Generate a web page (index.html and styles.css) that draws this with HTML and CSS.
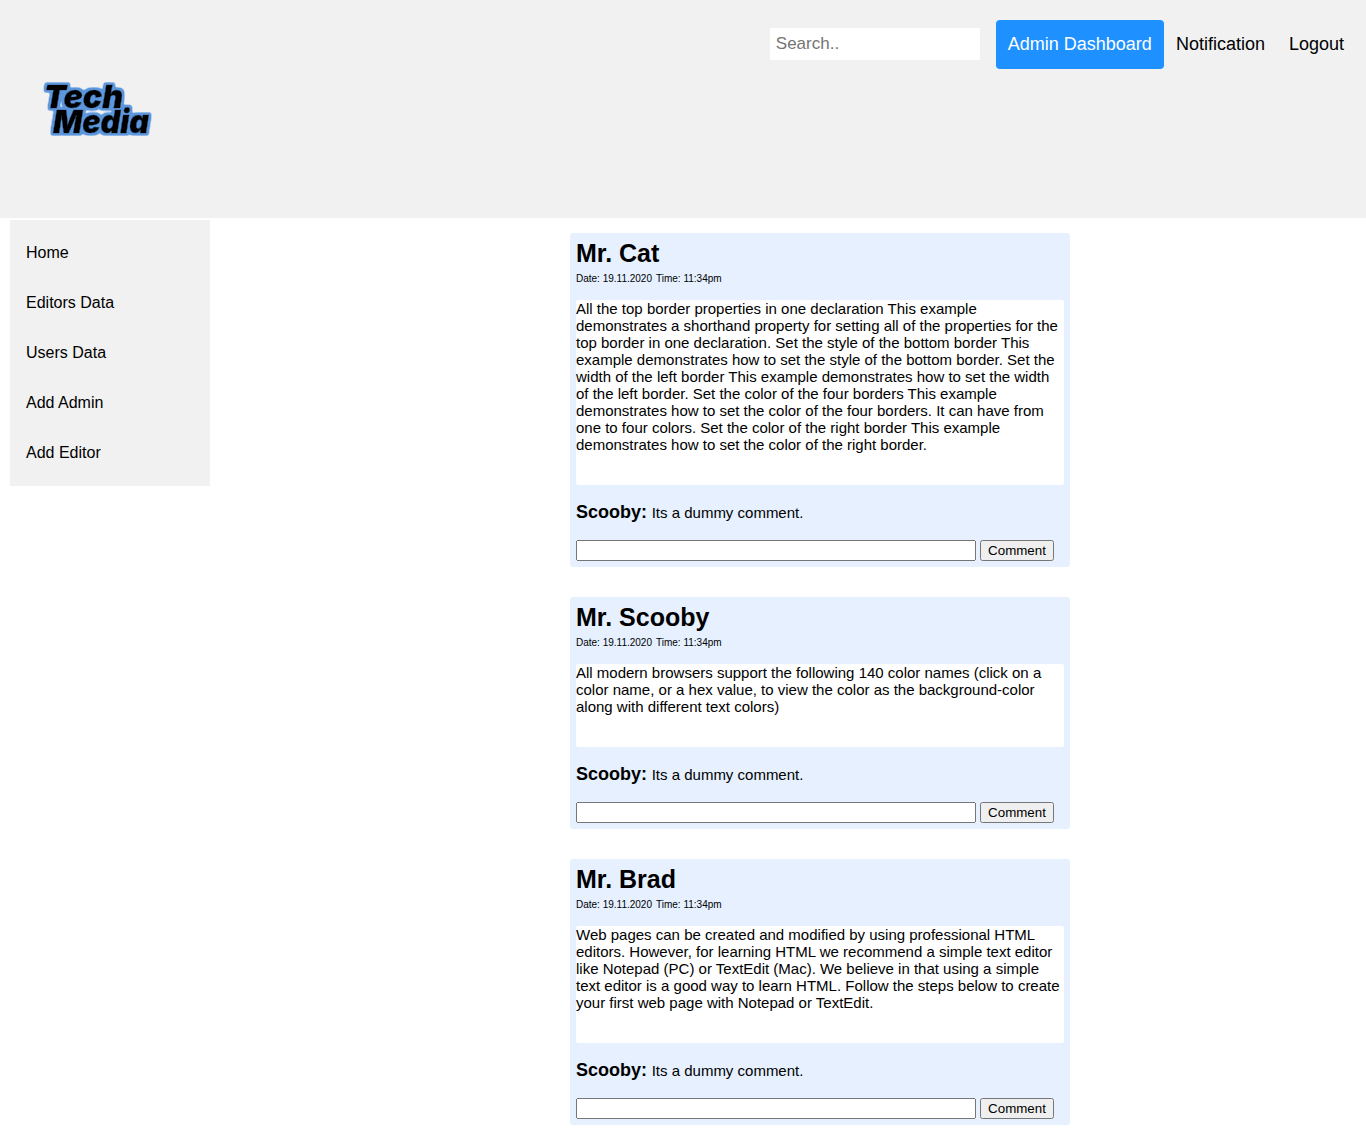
FILE: index.html
```html
<!DOCTYPE html>
<html lang="en">
<head>
<meta charset="utf-8">
<title>Tech Media</title>
<link rel="stylesheet" href="styles.css">
</head>
<body>
<header class="header">
  <a class="logo" href="#">
    <svg width="120" height="70" viewBox="0 0 120 70" role="img" aria-label="Tech Media">
      <filter id="outline" x="-10%" y="-20%" width="120%" height="140%">
        <feMorphology in="SourceAlpha" operator="dilate" radius="2" result="wide"/>
        <feGaussianBlur in="wide" stdDeviation="0.9" result="soft"/>
        <feComponentTransfer in="soft" result="edge"><feFuncA type="linear" slope="2.4" intercept="-0.35"/></feComponentTransfer>
        <feFlood flood-color="#5b96dc" result="blue"/>
        <feComposite in="blue" in2="edge" operator="in" result="halo"/>
        <feMerge><feMergeNode in="halo"/><feMergeNode in="SourceGraphic"/></feMerge>
      </filter>
      <g filter="url(#outline)">
        <text x="6" y="36" textLength="79" lengthAdjust="spacingAndGlyphs">Tech</text>
        <text x="15" y="60.5" textLength="96" lengthAdjust="spacingAndGlyphs">Media</text>
      </g>
    </svg>
  </a>
  <nav class="topnav">
    <input class="search" type="text" placeholder="Search..">
    <a class="active" href="#">Admin Dashboard</a>
    <a href="#">Notification</a>
    <a href="#">Logout</a>
  </nav>
</header>
<div class="content">
  <nav class="sidebar">
    <a href="#">Home</a>
    <a href="#">Editors Data</a>
    <a href="#">Users Data</a>
    <a href="#">Add Admin</a>
    <a href="#">Add Editor</a>
  </nav>
  <main class="posts">
    <article class="post">
      <h2>Mr. Cat</h2>
      <div class="meta"><span>Date: 19.11.2020</span><span>Time: 11:34pm</span></div>
      <div class="body">All the top border properties in one declaration This example demonstrates a shorthand property for setting all of the properties for the top border in one declaration. Set the style of the bottom border This example demonstrates how to set the style of the bottom border. Set the width of the left border This example demonstrates how to set the width of the left border. Set the color of the four borders This example demonstrates how to set the color of the four borders. It can have from one to four colors. Set the color of the right border This example demonstrates how to set the color of the right border.</div>
      <p class="comment"><b>Scooby:</b> Its a dummy comment.</p>
      <form class="reply"><input type="text"><button type="button">Comment</button></form>
    </article>
    <article class="post">
      <h2>Mr. Scooby</h2>
      <div class="meta"><span>Date: 19.11.2020</span><span>Time: 11:34pm</span></div>
      <div class="body">All modern browsers support the following 140 color names (click on a color name, or a hex value, to view the color as the background-color along with different text colors)</div>
      <p class="comment"><b>Scooby:</b> Its a dummy comment.</p>
      <form class="reply"><input type="text"><button type="button">Comment</button></form>
    </article>
    <article class="post">
      <h2>Mr. Brad</h2>
      <div class="meta"><span>Date: 19.11.2020</span><span>Time: 11:34pm</span></div>
      <div class="body">Web pages can be created and modified by using professional HTML editors. However, for learning HTML we recommend a simple text editor like Notepad (PC) or TextEdit (Mac). We believe in that using a simple text editor is a good way to learn HTML. Follow the steps below to create your first web page with Notepad or TextEdit.</div>
      <p class="comment"><b>Scooby:</b> Its a dummy comment.</p>
      <form class="reply"><input type="text"><button type="button">Comment</button></form>
    </article>
  </main>
</div>
</body>
</html>
```
FILE: styles.css
```css
* { box-sizing: border-box; }
body {
  margin: 0;
  font-family: "Liberation Sans", Arial, sans-serif;
  color: #000;
  background: #fff;
}
a { color: #000; text-decoration: none; }
.header {
  display: flex;
  justify-content: space-between;
  align-items: flex-start;
  height: 218px;
  padding: 20px 10px;
  background: #f1f1f1;
}
.logo { margin: 52px 0 0 28px; }
.logo svg { display: block; }
.logo text {
  font: italic 900 32px Inter, sans-serif;
  fill: #000;
  stroke: #000;
  stroke-width: 0.5px;
}
.topnav { display: flex; align-items: flex-start; }
.topnav a {
  padding: 12px 12px 13px;
  border-radius: 4px;
  font-size: 18px;
  line-height: 24px;
}
.topnav .active { background: #1e90ff; color: #fff; }
.search {
  width: 210px;
  height: 32px;
  margin: 8px 16px 0 0;
  padding: 6px;
  border: 0;
  font: 17px "Liberation Sans", Arial, sans-serif;
}
.content { display: flex; align-items: flex-start; padding: 2px 10px 0; }
.sidebar { width: 200px; height: 266px; padding-top: 8px; background: #f1f1f1; }
.sidebar a {
  display: block;
  padding: 16px;
  font-size: 16px;
  line-height: 18px;
}
.posts {
  display: flex;
  flex-direction: column;
  gap: 30px;
  width: 500px;
  margin: 13px 0 0 360px;
}
.post {
  padding: 6px;
  border-radius: 3px;
  background: #e6f0ff;
}
.post h2 { margin: 0; font-size: 25px; line-height: 29px; }
.meta {
  display: flex;
  gap: 4px;
  margin: 5px 0 15px;
  font-size: 10px;
  line-height: 12px;
}
.body {
  padding-bottom: 32px;
  border-radius: 2px;
  background: #fff;
  font-size: 15px;
  line-height: 17px;
}
.comment { margin: 17px 0; font-size: 15px; line-height: 21px; }
.comment b { font-size: 18px; margin-right: 0.5px; }
.reply { display: flex; gap: 4px; height: 21px; }
.reply input { width: 400px; height: 21px; }
.reply button {
  width: 74px;
  height: 21px;
  padding: 1px 6px;
  font: 13.333px "Liberation Sans", Arial, sans-serif;
}
```
